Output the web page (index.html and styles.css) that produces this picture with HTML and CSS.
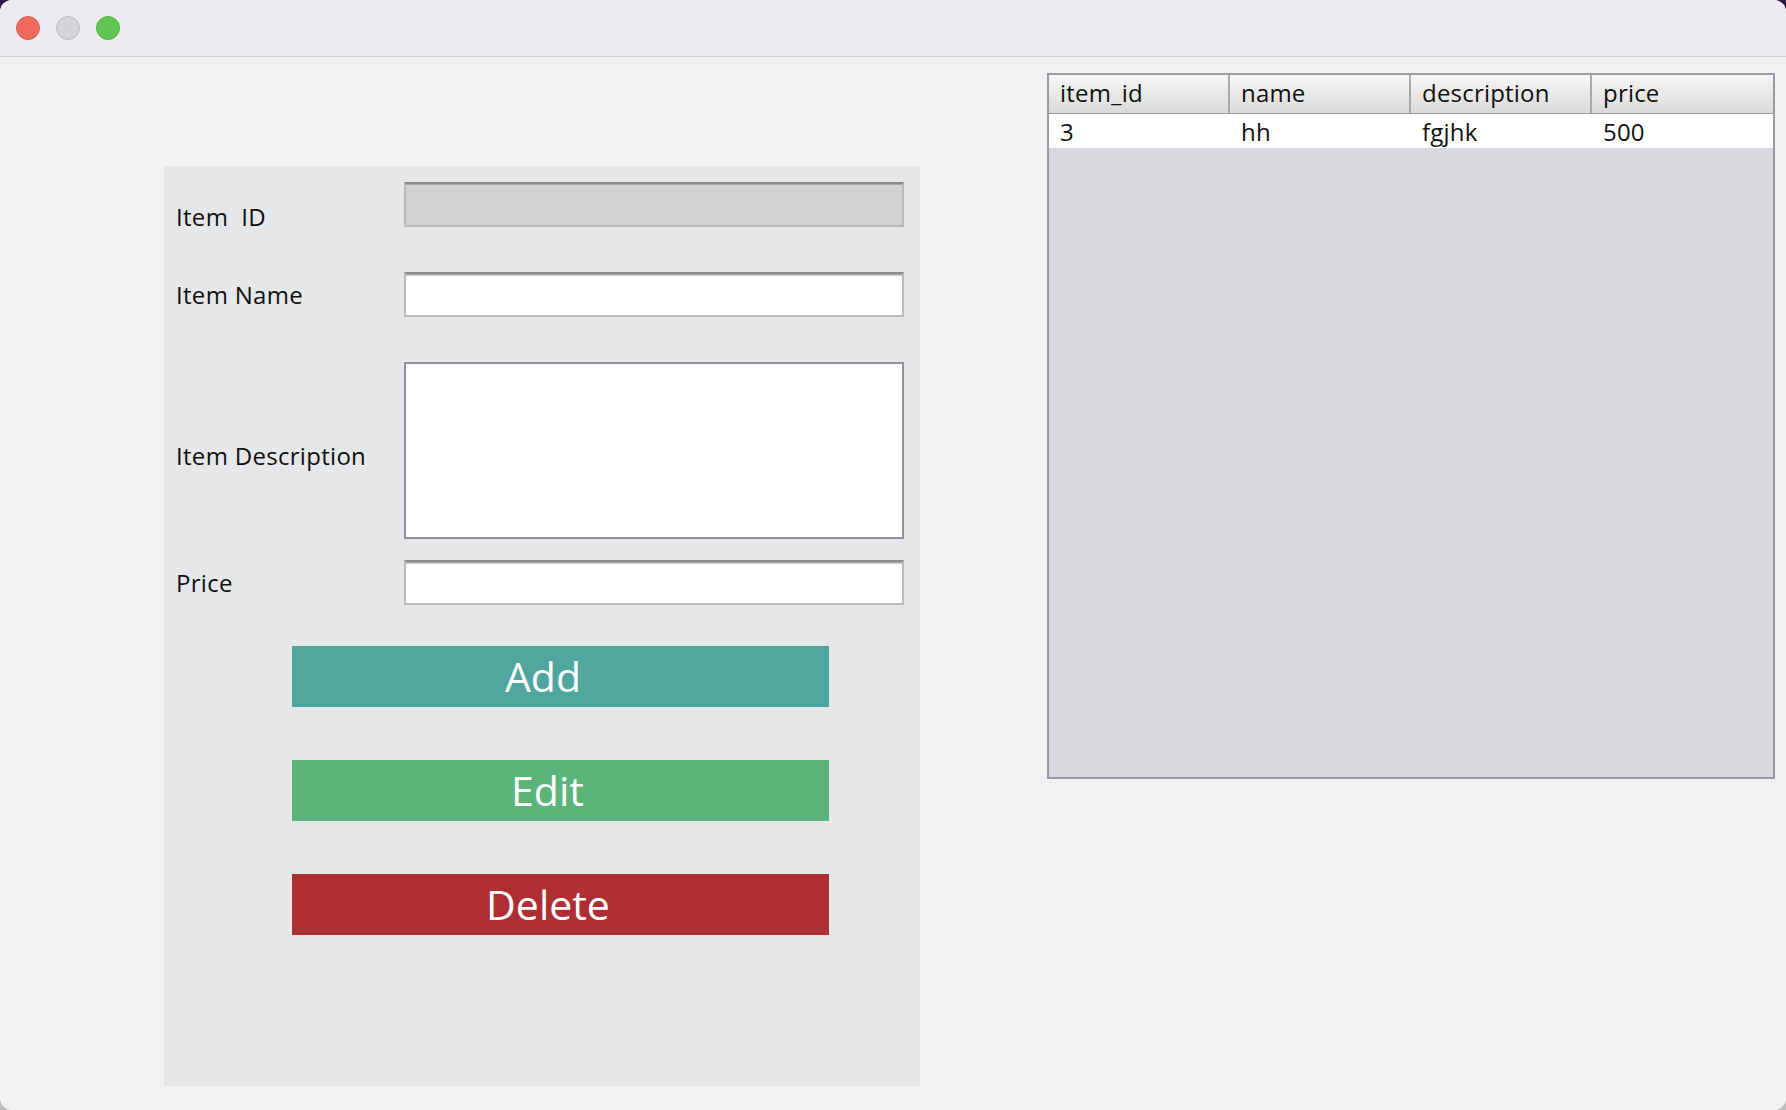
FILE: index.html
```html
<!DOCTYPE html>
<html>
<head>
<meta charset="utf-8">
<title>Items</title>
<link rel="stylesheet" href="styles.css">
</head>
<body>
<div class="window">
  <div class="titlebar">
    <span class="light red"></span>
    <span class="light gray"></span>
    <span class="light green"></span>
  </div>
  <div class="content">
    <div class="form-panel">
      <div class="row row1">
        <div class="lbl">Item&nbsp;&nbsp;ID</div>
        <div class="field disabled"></div>
      </div>
      <div class="row row2">
        <div class="lbl">Item Name</div>
        <div class="field"></div>
      </div>
      <div class="row row3">
        <div class="lbl">Item Description</div>
        <div class="area"></div>
      </div>
      <div class="row row4">
        <div class="lbl">Price</div>
        <div class="field"></div>
      </div>
      <div class="buttons">
        <div class="btn add">Add</div>
        <div class="btn edit">Edit</div>
        <div class="btn delete">Delete</div>
      </div>
    </div>
    <div class="table">
      <div class="thead">
        <div class="th">item_id</div>
        <div class="th">name</div>
        <div class="th">description</div>
        <div class="th last">price</div>
      </div>
      <div class="trow">
        <div class="td">3</div>
        <div class="td">hh</div>
        <div class="td">fgjhk</div>
        <div class="td">500</div>
      </div>
    </div>
  </div>
</div>
</body>
</html>
```
FILE: styles.css
```css
html {
  background: linear-gradient(#2a1a48 0, #2a1a48 40px, #bdbdbd 40px);
}
body {
  margin: 0;
  font-family: "Open Sans", "Noto Sans", sans-serif;
  color: #111111;
}
.window {
  width: 1786px;
  height: 1110px;
  background: #f2f2f2;
  border-radius: 12px;
  overflow: hidden;
  display: flex;
  flex-direction: column;
}
.titlebar {
  height: 56px;
  flex: none;
  background: #eeecf2;
  border-bottom: 1px solid #d2d1d6;
  display: flex;
  align-items: center;
  padding-left: 16px;
  gap: 16px;
}
.light {
  width: 24px;
  height: 24px;
  border-radius: 50%;
  box-sizing: border-box;
}
.red { background: #ee6a5f; border: 1px solid #dc5d53; }
.gray { background: #d5d3d9; border: 1px solid #bebcc2; }
.green { background: #61c554; border: 1px solid #54b448; }
.content {
  display: flex;
  align-items: flex-start;
  flex: 1;
}
.form-panel {
  margin-left: 164px;
  margin-top: 109px;
  width: 756px;
  height: 920px;
  box-sizing: border-box;
  padding: 16px 0 0 12px;
  background: #e6e7e9;
}
.row {
  display: flex;
  align-items: flex-start;
}
.lbl {
  width: 228px;
  flex: none;
  font-size: 24px;
  line-height: 33px;
  letter-spacing: 0.3px;
  white-space: nowrap;
}
.row1 { height: 45px; }
.row1 .lbl { margin-top: 18px; }
.row2 { margin-top: 45px; }
.row2 .lbl { margin-top: 6px; }
.row3 { margin-top: 45px; }
.row3 .lbl { margin-top: 77px; }
.row4 { margin-top: 21px; }
.row4 .lbl { margin-top: 6px; }
.field {
  width: 500px;
  height: 45px;
  box-sizing: border-box;
  background: #ffffff;
  border: 2px solid #bababa;
  border-top-color: #8c8c8c;
  box-shadow: inset 0 1px 0 #a6a6a6, inset 0 2px 0 #d4d4d4;
}
.field.disabled {
  background: #d1d2d4;
}
.area {
  width: 500px;
  height: 177px;
  box-sizing: border-box;
  background: #ffffff;
  border: 2px solid #8f929a;
}
.buttons {
  margin-top: 41px;
  margin-left: 116px;
  display: flex;
  flex-direction: column;
  gap: 53px;
}
.btn {
  width: 537px;
  height: 61px;
  box-sizing: border-box;
  display: flex;
  align-items: center;
  justify-content: center;
  color: #ffffff;
  font-size: 41px;
  line-height: 61px;
}
.add { background: #4ea69f; padding-right: 35px; }
.edit { background: #5bb57a; padding-right: 26px; }
.delete { background: #af2e34; padding-right: 25px; }
.table {
  margin-left: 127px;
  margin-top: 16px;
  width: 728px;
  height: 706px;
  box-sizing: border-box;
  border: 2px solid #9a9ca3;
  background: #d8d9de;
}
.thead {
  display: grid;
  grid-template-columns: repeat(4, 1fr);
  height: 39px;
  box-sizing: border-box;
  border-bottom: 1px solid #9c9c9c;
  background: linear-gradient(#f6f6f6, #e6e6e6 60%, #d9d9d9);
}
.th {
  font-size: 24px;
  line-height: 36px;
  letter-spacing: 0.2px;
  padding: 0 0 2px 11px;
  border-right: 2px solid #aaaaaa;
}
.th.last { border-right: none; }
.trow {
  display: grid;
  grid-template-columns: repeat(4, 1fr);
  height: 34px;
  background: #ffffff;
}
.td {
  font-size: 24px;
  line-height: 36px;
  letter-spacing: 0.2px;
  padding-left: 11px;
}
```
